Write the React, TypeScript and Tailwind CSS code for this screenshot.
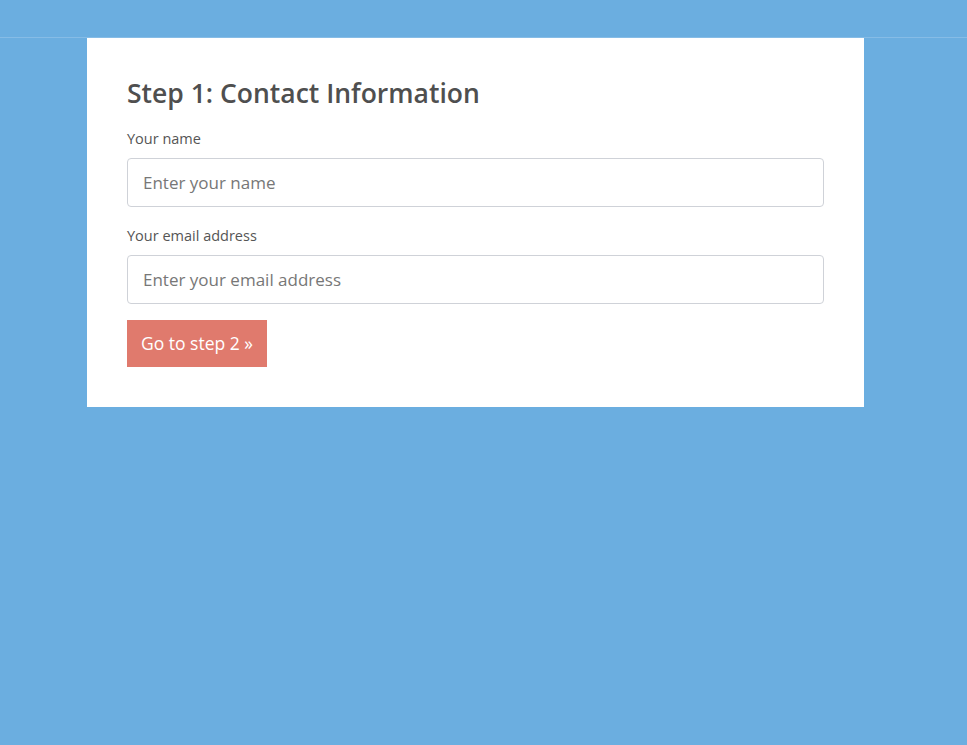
export default function App() {
  return (
    <div className="min-h-[745px] w-full bg-[#6baee0] font-['Open_Sans',sans-serif]">
      <div className="h-[38px] border-b border-[#86bce6]" />
      <div className="ml-[87px] w-[777px] bg-white px-[40px] pt-[36px] pb-[40px]">
        <h2 className="text-[26.5px] font-semibold leading-[38px] text-[#4f4f4f]">
          Step 1: Contact Information
        </h2>
        <form className="mt-[17px]" onSubmit={(e) => e.preventDefault()}>
          <label className="block text-[14.5px] leading-[20px] text-[#555]">Your name</label>
          <input
            type="text"
            placeholder="Enter your name"
            className="mt-[9px] block h-[49px] w-full rounded-[4px] border border-[#cfd2d8] px-[15px] text-[17px] text-[#555] placeholder:text-[#777] outline-none"
          />
          <label className="mt-[19px] block text-[14.5px] leading-[20px] text-[#555]">
            Your email address
          </label>
          <input
            type="email"
            placeholder="Enter your email address"
            className="mt-[9px] block h-[49px] w-full rounded-[4px] border border-[#cfd2d8] px-[15px] text-[17px] text-[#555] placeholder:text-[#777] outline-none"
          />
          <button
            type="submit"
            className="mt-[16px] h-[47px] bg-[#e07a6d] px-[14px] text-[17.5px] text-white"
          >
            Go to step 2 »
          </button>
        </form>
      </div>
    </div>
  );
}
